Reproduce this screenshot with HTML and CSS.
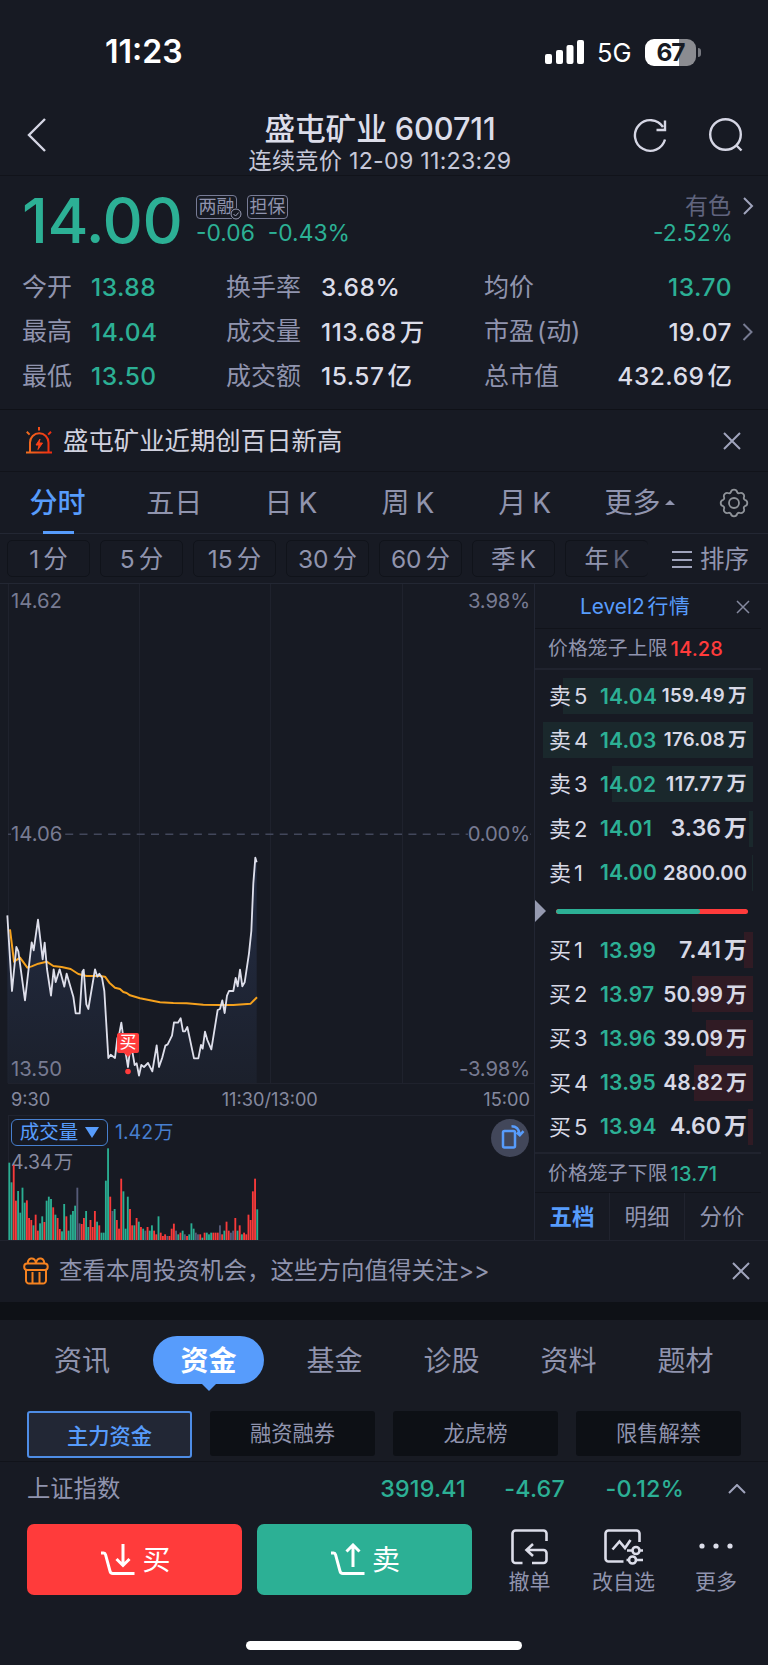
FILE: index.html
```
<!DOCTYPE html>
<html lang="zh-CN">
<head>
  <meta charset="UTF-8">
  <meta name="viewport" content="width=device-width, initial-scale=1.0">
  <title>盛屯矿业 600711</title>
  <link rel="stylesheet" href="styles.css">
</head>
<body>
  <!-- Status bar -->
  <div class="status-bar">
    <span class="clock">11:23</span>
    <div class="status-right">
      <svg class="signal" width="40" height="26" viewBox="0 0 40 26">
        <rect x="0" y="15" width="7" height="10" rx="2"/>
        <rect x="11" y="11" width="7" height="14" rx="2"/>
        <rect x="21.500" y="6" width="7" height="19" rx="2"/>
        <rect x="32" y="1" width="7" height="24" rx="2"/>
      </svg>
      <span class="network">5G</span>
      <div class="battery"><span>67</span></div>
      <i class="battery-tip"></i>
    </div>
  </div>

  <!-- Header -->
  <header class="top-bar">
    <svg class="back" width="22" height="36" viewBox="0 0 22 36"><path d="M19 2L3 18l16 16"/></svg>
    <div class="title">
      <h1>盛屯矿业 600711</h1>
      <p>连续竞价 12-09 11:23:29</p>
    </div>
    <div class="top-icons">
      <svg width="36" height="36" viewBox="0 0 36 36"><path d="M33 22.500A15.300 15.300 0 1 1 31 10M33 3.500v9.500H24.500"/></svg>
      <svg width="36" height="36" viewBox="0 0 36 36"><circle cx="17.500" cy="17.500" r="15.300"/><path d="M28 28l5.500 5.500"/></svg>
    </div>
  </header>

  <!-- Quote -->
  <section class="quote">
    <div class="quote-top">
      <span class="price">14.00</span>
      <div class="change">
        <div class="tags">
          <span class="tag">两融<svg class="tag-check" width="12" height="12" viewBox="0 0 12 12"><circle cx="6" cy="6" r="5"/><path d="M3.500 6l2 2 3.200-3.500"/></svg></span>
          <span class="tag">担保</span>
        </div>
        <div class="diff"><span>-0.06</span><span>-0.43%</span></div>
      </div>
      <div class="sector">
        <span class="sector-name">有色</span>
        <span class="sector-diff">-2.52%</span>
      </div>
      <svg class="arrow" width="12" height="18" viewBox="0 0 12 18"><path d="M2 1l8 8-8 8"/></svg>
    </div>
    <div class="stats">
      <span>今开</span><b class="green">13.88</b><span>换手率</span><b>3.68%</b><span>均价</span><b class="green last">13.70</b><i></i>
      <span>最高</span><b class="green">14.04</b><span>成交量</span><b>113.68<em>万</em></b><span>市盈<em>(动)</em></span><b class="last">19.07</b><svg width="12" height="18" viewBox="0 0 12 18"><path d="M1.500 1l8 8-8 8"/></svg>
      <span>最低</span><b class="green">13.50</b><span>成交额</span><b>15.57<em>亿</em></b><span>总市值</span><b class="last">432.69<em>亿</em></b><i></i>
    </div>
  </section>

  <!-- News alert -->
  <div class="alert">
    <svg width="28" height="28" viewBox="0 0 28 28">
      <defs><linearGradient id="alarm" x1="0" x2="1"><stop offset="0" stop-color="#f07020"/><stop offset="1" stop-color="#f02a10"/></linearGradient></defs>
      <path d="M1 26.500h26M5 26V16.500a9 9 0 0 1 18.500 0V26M14 1v3.500M1.800 5.800l2.800 2.800M26 5.800l-2.800 2.800" fill="none" stroke="url(#alarm)" stroke-width="2"/>
      <path d="M15 13l-4 6h3l-1 4.500 4.500-6.500H14z" fill="#f84018" stroke="#f84018" stroke-width="1"/>
    </svg>
    <span>盛屯矿业近期创百日新高</span>
    <svg class="close" width="18" height="18" viewBox="0 0 18 18"><path d="M1 1l16 16M17 1L1 17"/></svg>
  </div>

  <!-- Chart tabs -->
  <nav class="chart-tabs">
    <span class="active">分时</span><span>五日</span><span>日<em>K</em></span><span>周<em>K</em></span><span>月<em>K</em></span>
    <span class="more">更多<i></i></span>
    <svg width="30" height="30" viewBox="0 0 30 30"><path d="M11.800 4.200a3.300 3.300 0 0 1 6.400 0a2 2 0 0 0 2.200 1a3.300 3.300 0 0 1 4.400 4.400a2 2 0 0 0 1 2.200a3.300 3.300 0 0 1 0 6.400a2 2 0 0 0-1 2.200a3.300 3.300 0 0 1-4.400 4.400a2 2 0 0 0-2.200 1a3.300 3.300 0 0 1-6.400 0a2 2 0 0 0-2.200-1a3.300 3.300 0 0 1-4.400-4.400a2 2 0 0 0-1-2.200a3.300 3.300 0 0 1 0-6.400a2 2 0 0 0 1-2.200a3.300 3.300 0 0 1 4.400-4.400a2 2 0 0 0 2.200-1z"/><circle cx="15" cy="15" r="5"/></svg>
  </nav>
  <nav class="periods">
    <span>1<em>分</em></span><span>5<em>分</em></span><span>15<em>分</em></span><span>30<em>分</em></span><span>60<em>分</em></span><span>季<em>K</em></span><span class="fade">年<em>K</em></span>
    <div class="sort"><i></i>排序</div>
  </nav>

  <main class="market">
    <div class="charts">
      <!-- Price chart -->
      <div class="price-chart">
        <svg width="534" height="500" viewBox="0 0 534 500">
          <defs><linearGradient id="area" x1="0" y1="0" x2="0" y2="1"><stop offset="0" stop-color="#26304a"/><stop offset="1" stop-color="#1c212d"/></linearGradient></defs>
          <path d="M8.500 0v499M139.500 0v499M270.500 0v499M402.500 0v499M8 499.500h526" class="grid"/>
          <path d="M8 250.300H534" stroke="#42475b" stroke-width="1.500" stroke-dasharray="8 6.300" fill="none"/>
          <g transform="translate(0 236) scale(.33333)" fill="none">
            <path id="areaPath" fill="url(#area)" opacity=".85"/>
            <polyline stroke="#f5a11d" stroke-width="6" stroke-linejoin="round" points="30,328 42,425 60,413 82,443 95,439 115,431 140,425 160,438 185,441 212,447 235,462 260,468 300,468 315,470 328,488 345,503 360,507 370,516 380,519 390,526 420,535 450,541 480,547 520,549 560,550 610,554 660,555 700,555 752,551 762,541 771,532"/>
            <polyline id="priceLine" stroke="#dedfeb" stroke-width="5.500" stroke-linejoin="round" points="22,286 36,513 49,381 55,394 75,541 95,367 101,391 114,299 128,418 134,368 141,447 153,527 161,448 167,486 179,448 193,500 200,461 220,530 227,580 239,580 247,455 251,449 259,553 265,567 285,448 292,470 298,461 306,473 313,513 325,714 332,704 345,714 352,655 358,640 364,608 371,660 378,705 384,741 391,680 398,700 404,735 410,730 417,767 424,735 432,741 444,729 457,754 470,676 477,741 487,712 496,677 503,673 516,647 522,607 534,608 542,595 549,634 555,634 562,621 582,715 595,715 603,675 608,686 615,635 622,660 634,688 653,570 660,567 667,541 674,579 681,527 687,513 700,513 707,474 713,499 720,449 727,499 734,487 747,400 754,333 760,190 766,113 770,127"/>
          </g>
          <path d="M124 469l4 4 4-4z" fill="#ff3b3b"/>
          <circle cx="128" cy="487.500" r="2.800" fill="#ff3b3b"/>
        </svg>
        <span class="label tl">14.62</span>
        <span class="label tr">3.98%</span>
        <span class="label ml">14.06</span>
        <span class="label mr">0.00%</span>
        <span class="label bl">13.50</span>
        <span class="label br">-3.98%</span>
        <span class="buy-flag">买</span>
      </div>
      <div class="times"><span>9:30</span><span class="noon">11:30/13:00</span><span>15:00</span></div>

      <!-- Volume chart -->
      <div class="volume">
        <div class="volume-head">
          <span class="select">成交量<i></i></span>
          <span class="current">1.42<em>万</em></span>
        </div>
        <span class="max">4.34<em>万</em></span>
        <svg id="volumeBars" width="260" height="92" viewBox="0 0 260 92"></svg>
        <div class="rotate">
          <svg width="24" height="26" viewBox="0 0 24 26"><rect x="2" y="7" width="12" height="16.500" rx="1.500"/><path d="M10.500 2.200c4.500 0 7.500 2.700 8.300 8.300M15.700 8.500l3.100 2.800 3.700-4.200"/></svg>
        </div>
      </div>
    </div>

    <!-- Order book -->
    <aside class="book">
      <div class="book-head"><span>Level2<em>行情</em></span><svg width="14" height="14" viewBox="0 0 14 14"><path d="M1 1l12 12M13 1L1 13"/></svg></div>
      <div class="limit upper">价格笼子上限<b class="red">14.28</b></div>
      <ul class="orders asks">
        <li><i style="width: 190px"></i><span>卖<em>5</em></span><b>14.04</b><strong class="s">159.49<em>万</em></strong></li>
        <li><i style="width: 210px"></i><span>卖<em>4</em></span><b>14.03</b><strong class="s">176.08<em>万</em></strong></li>
        <li><i style="width: 141px"></i><span>卖<em>3</em></span><b>14.02</b><strong class="m">117.77<em>万</em></strong></li>
        <li><i style="width: 4px"></i><span>卖<em>2</em></span><b>14.01</b><strong>3.36<em>万</em></strong></li>
        <li><i style="width: 1px"></i><span>卖<em>1</em></span><b>14.00</b><strong class="m">2800.00</strong></li>
      </ul>
      <div class="ratio"><i class="pointer"></i><div class="ratio-bar"><i style="width: 75.200%"></i></div></div>
      <ul class="orders bids">
        <li><i style="width: 9px"></i><span>买<em>1</em></span><b>13.99</b><strong>7.41<em>万</em></strong></li>
        <li><i style="width: 61px"></i><span>买<em>2</em></span><b>13.97</b><strong class="l">50.99<em>万</em></strong></li>
        <li><i style="width: 47px"></i><span>买<em>3</em></span><b>13.96</b><strong class="l">39.09<em>万</em></strong></li>
        <li><i style="width: 59px"></i><span>买<em>4</em></span><b>13.95</b><strong class="l">48.82<em>万</em></strong></li>
        <li><i style="width: 5px"></i><span>买<em>5</em></span><b>13.94</b><strong>4.60<em>万</em></strong></li>
      </ul>
      <div class="limit lower">价格笼子下限<b class="green">13.71</b></div>
      <div class="book-tabs"><span class="active">五档</span><span>明细</span><span>分价</span></div>
    </aside>
  </main>

  <!-- Promo -->
  <div class="promo">
    <svg width="26" height="28" viewBox="0 0 26 28"><rect x="1.200" y="6.500" width="23.500" height="6.500" rx="3"/><path d="M3 13v10.500a3 3 0 0 0 3 3h14a3 3 0 0 0 3-3V13M9.500 15v11M16.500 15v11M13 6.500C13 3 10.500 1 8 1.500S4.500 4.500 5 6.500M13 6.500C13 3 15.500 1 18 1.500s3.500 3 3 5"/></svg>
    <span>查看本周投资机会，这些方向值得关注&gt;&gt;</span>
    <svg class="close" width="18" height="18" viewBox="0 0 18 18"><path d="M1 1l16 16M17 1L1 17"/></svg>
  </div>

  <!-- Info tabs -->
  <nav class="info-tabs">
    <span>资讯</span><span class="active">资金</span><span>基金</span><span>诊股</span><span>资料</span><span>题材</span>
  </nav>
  <div class="sub-tabs">
    <span class="active">主力资金</span><span>融资融券</span><span>龙虎榜</span><span>限售解禁</span>
  </div>

  <!-- Index row -->
  <div class="index-row">
    <span class="index-name">上证指数</span>
    <b class="i1">3919.41</b><b class="i2">-4.67</b><b class="i3">-0.12%</b>
    <svg width="18" height="10" viewBox="0 0 18 10"><path d="M1 9l8-8 8 8"/></svg>
  </div>

  <!-- Bottom actions -->
  <footer class="actions">
    <button class="buy"><svg width="36" height="34" viewBox="0 0 36 34"><path d="M1 10h2.500a2 2 0 0 1 2 1.500L10 28a3 3 0 0 0 3 2.500h21.500M23 1v21.500M16.500 16l6.500 6.500 6.500-6.500"/></svg>买</button>
    <button class="sell"><svg width="36" height="34" viewBox="0 0 36 34"><path d="M1 10h2.500a2 2 0 0 1 2 1.500L10 28a3 3 0 0 0 3 2.500h21.500M23 24V2M16.500 8.500L23 2l6.500 6.500"/></svg>卖</button>
    <div class="action a1">
      <svg width="38" height="36" viewBox="0 0 38 36"><path d="M11.500 34H4.500a3 3 0 0 1-3-3V4.500a3 3 0 0 1 3-3h28a3 3 0 0 1 3 3V12M22 15l-6.500 6 6.500 6M16 21h16.500a3 3 0 0 1 3 3v7a3 3 0 0 1-3 3H21"/></svg>
      <span>撤单</span>
    </div>
    <div class="action a2">
      <svg width="40" height="36" viewBox="0 0 40 36"><path d="M19.500 32.500H4.500a3 3 0 0 1-3-3v-25a3 3 0 0 1 3-3h28a3 3 0 0 1 3 3V13M8.500 20.500l7-8 5.500 6.500 5.500-8M23 21.500h5.500M35.500 21.500H39M22.500 31h2.500M32 31h7"/><circle cx="32" cy="21.500" r="3.500"/><circle cx="28.500" cy="31" r="3.500"/></svg>
      <span>改自选</span>
    </div>
    <div class="action a3">
      <svg width="36" height="36" viewBox="0 0 36 36" class="dots"><circle cx="4" cy="17" r="2.600"/><circle cx="18" cy="17" r="2.600"/><circle cx="32" cy="17" r="2.600"/></svg>
      <span>更多</span>
    </div>
  </footer>
  <div class="home-indicator"><i></i></div>

  <script>
    // Close the price line down to the axis for the area fill
    const points = document.getElementById('priceLine').getAttribute('points');
    document.getElementById('areaPath').setAttribute('d', 'M' + points.replaceAll(' ', 'L') + 'L770,789L22,789Z');

    // One bar per minute: direction (g down, r up, n flat) and height
    const volumes = 'g232 g173 r225 r118 g147 g82 g157 g112 r119 r66 r60 g44 r76 r28 g50 g71 r54 g118 g130 g123 r98 g76 r66 r33 g26 g108 r71 g28 g76 g87 g103 n157 n50 r48 r66 g87 g39 r60 r39 r87 g55 r44 g22 g22 g178 g275 r130 n87 g93 r60 r34 r184 g146 g34 g130 r93 r44 g44 r66 g55 r39 g34 n28 r39 g28 g44 r28 r17 g71 r22 r12 r17 n12 r12 r34 r49 n28 g17 r22 g28 n17 r12 g17 g50 g34 n22 n17 r17 g7 r22 g22 g17 g22 r22 r22 r22 n44 r17 g28 r55 r28 n22 n28 r66 g28 r44 g17 r22 r17 r76 r60 r146 r184 g92'.split(' ');
    const colors = { g: '#2aae92', r: '#f83a3a', n: '#565b78' };
    document.getElementById('volumeBars').innerHTML = volumes.map((item, i) => {
      const h = item.slice(1) / 3;
      return `<rect x="${(8.4 + i * 2.194).toFixed(2)}" y="${(92 - h).toFixed(2)}" width="1.85" height="${h.toFixed(2)}" fill="${colors[item[0]]}"/>`;
    }).join('');
  </script>
</body>
</html>
```
FILE: styles.css
```
/* General Styling */
* {
  box-sizing: border-box;
}

body {
  margin: 0;
  width: 768px;
  height: 1665px;
  overflow: hidden;
  background-color: #171a23;
  color: #9094ae;
  font-family: Inter, "Noto Sans CJK SC", sans-serif;
  line-height: 1;
  white-space: nowrap;
}

h1, p, ul {
  margin: 0;
  padding: 0;
}

em, i {
  font-style: normal;
}

b {
  font-weight: 500;
}

svg {
  flex: none;
  fill: none;
  stroke: #a0a4bc;
  stroke-width: 2;
}

.green {
  color: #2cb095;
}

.red {
  color: #ff3b3b;
}

/* Status bar */
.status-bar {
  height: 100px;
  padding: 4px 67px 0 105px;
  display: flex;
  align-items: center;
  justify-content: space-between;
  color: #fff;
}

.clock {
  font-size: 32px;
  font-weight: 600;
}

.status-right {
  display: flex;
  align-items: center;
}

.signal {
  fill: #fff;
  stroke: none;
}

.network {
  margin-left: 12px;
  width: 48px;
  padding-top: 2px;
  font-size: 25.500px;
}

.battery {
  width: 51px;
  height: 27px;
  border-radius: 9px;
  background: linear-gradient(90deg, #fff 67%, #8b8c91 67%);
  color: #171a23;
  display: flex;
  align-items: center;
  justify-content: center;
  font-size: 24.500px;
  font-weight: 700;
  letter-spacing: -1px;
}

.battery-tip {
  width: 3px;
  height: 9px;
  margin-left: 2px;
  border-radius: 0 4px 4px 0;
  background-color: #777980;
}

/* Header */
.top-bar {
  height: 76px;
  padding: 0 24px 0 26px;
  display: grid;
  grid-template-columns: 112px 1fr 112px;
  border-bottom: 1px solid #11131a;
}

.top-bar svg {
  stroke: #d5d6e4;
  stroke-width: 2.400;
  margin-top: 17px;
}

.title {
  text-align: center;
  color: #dcdde9;
  padding: 14px 10px 0 0;
}

.title h1 {
  font-size: 30.700px;
  line-height: 30px;
  font-weight: 500;
  letter-spacing: -0.100px;
}

.title p {
  margin-top: 6px;
  font-size: 23.200px;
  line-height: 23px;
  letter-spacing: 0.250px;
  color: #c6c8d9;
}

.top-icons {
  display: flex;
  justify-content: space-between;
}

/* Quote */
.quote {
  height: 234px;
  border-bottom: 1px solid #0f1117;
}

.quote-top {
  height: 89px;
  padding: 0 14px 0 22px;
  display: flex;
}

.price {
  width: 174px;
  padding-top: 13px;
  font-size: 62.500px;
  font-weight: 500;
  letter-spacing: -0.500px;
  color: #2cb095;
}

.change {
  padding-top: 19px;
}

.tags {
  display: flex;
  gap: 10px;
}

.tag {
  position: relative;
  width: 41px;
  height: 24px;
  border: 1px solid #777b95;
  border-radius: 4px;
  font-size: 18px;
  line-height: 22px;
  text-align: center;
}

.tag-check {
  position: absolute;
  right: -6px;
  bottom: -2px;
  background-color: #171a23;
  border-radius: 50%;
  stroke-width: 1;
}

.diff {
  display: flex;
  gap: 13px;
  padding-top: 3px;
  font-size: 22.800px;
  color: #2cb095;
}

.sector {
  margin-left: auto;
  padding-top: 18px;
  display: flex;
  flex-direction: column;
  align-items: flex-end;
  font-size: 23px;
}

.sector-name {
  color: #60647e;
  line-height: 25px;
  padding-right: 2px;
}

.sector-diff {
  color: #2cb095;
  padding-top: 3px;
  font-size: 22.800px;
}

.arrow {
  margin: 21px 0 0 9px;
}

.stats {
  display: grid;
  grid-template-columns: 69px 135px 95px 163px 105px 143px 36px;
  grid-auto-rows: 44.600px;
  align-items: center;
  padding-left: 22px;
  font-size: 25px;
}

.stats b {
  font-size: 24.500px;
  letter-spacing: 0.500px;
}

.stats b:not(.green) {
  color: #dcdde9;
}

.stats em {
  margin-left: 3px;
  letter-spacing: 0;
}

.stats .last {
  text-align: right;
}

.stats svg {
  margin-left: 10px;
  stroke: #777b92;
}

/* News alert */
.alert {
  height: 62px;
  padding: 0 27px 0 25px;
  display: flex;
  align-items: center;
  border-bottom: 1px solid #11131a;
}

.alert svg:first-child {
  margin-top: -2px;
}

.alert span {
  margin-left: 10px;
  font-size: 25.400px;
  color: #d0d1df;
}

.close {
  margin-left: auto;
}

/* Chart tabs */
.chart-tabs {
  height: 62px;
  padding-right: 19px;
  display: flex;
  align-items: center;
  font-size: 28px;
  border-bottom: 1px solid #232733;
}

.chart-tabs span {
  position: relative;
  width: 116.800px;
  line-height: 62px;
  text-align: center;
}

.chart-tabs span:not(.active) {
  left: -1px;
}

.chart-tabs em {
  margin-left: 6px;
}

.chart-tabs .active {
  padding-right: 2px;
  color: #579cfc;
  font-weight: 500;
}

.chart-tabs .active::after {
  content: "";
  position: absolute;
  left: 43px;
  bottom: 0;
  width: 31px;
  height: 3px;
  background-color: #579cfc;
}

.chart-tabs .more {
  width: 114px;
  display: flex;
  align-items: center;
  justify-content: center;
  margin-right: auto;
}

.more i {
  margin-left: 5px;
  border: 5.500px solid transparent;
  border-top: none;
  border-bottom-color: #9094ae;
}

.chart-tabs svg {
  stroke: #8f9399;
  stroke-width: 1.800;
}

.periods {
  height: 50px;
  padding: 0 19px 0 7px;
  display: flex;
  align-items: center;
  gap: 10px;
  border-bottom: 1px solid #232733;
  font-size: 24.500px;
}

.periods span {
  width: 83px;
  height: 37px;
  border: 1px solid #10131a;
  border-radius: 5px;
  line-height: 37px;
  text-align: center;
}

.periods em {
  margin-left: 4px;
}

.periods .fade {
  border-right: none;
}

.fade em {
  color: #606479;
}

.sort {
  margin-left: auto;
  padding-top: 2px;
  display: flex;
  align-items: center;
  gap: 8px;
}

.sort i {
  width: 20px;
  height: 17px;
  border: solid #a0a4bc;
  border-width: 2px 0;
  background: linear-gradient(#a0a4bc, #a0a4bc) center / 20px 2px no-repeat;
}

/* Charts */
.market {
  display: flex;
  height: 657px;
  border-bottom: 1px solid #20232e;
}

.charts {
  width: 534px;
}

.price-chart {
  position: relative;
  height: 500px;
}

.price-chart > svg {
  display: block;
  stroke: none;
}

.grid {
  stroke: #1f222d;
  stroke-width: 1;
}

.label {
  position: absolute;
  font-size: 20.300px;
  color: #777b92;
}

.tl, .ml, .bl {
  left: 11px;
}

.tr, .mr, .br {
  right: 4px;
  letter-spacing: -0.150px;
}

.tl, .tr {
  top: 7px;
}

.ml, .mr {
  top: 240px;
  background-color: #171a23;
}

.bl, .br {
  bottom: 5px;
}

.buy-flag {
  position: absolute;
  left: 117px;
  top: 449px;
  width: 22px;
  height: 20px;
  border-radius: 2px;
  background-color: #ff3b3b;
  color: #fff;
  font-size: 17px;
  line-height: 19px;
  text-align: center;
}

.times {
  height: 31px;
  padding: 0 4px 1px 11px;
  display: flex;
  align-items: center;
  justify-content: space-between;
  font-size: 18.200px;
  color: #85899f;
}

.noon {
  padding-left: 6px;
}

.volume {
  position: relative;
  height: 125px;
  margin-left: 8px;
  border-top: 1px solid #20232e;
  border-left: 1px solid #20232e;
}

.volume-head {
  display: flex;
  align-items: center;
  padding: 3px 0 0 2px;
  font-size: 19.500px;
  color: #579cfc;
}

.select {
  height: 27px;
  width: 97px;
  border: 1.500px solid #477fce;
  border-radius: 6px;
  display: flex;
  align-items: center;
  justify-content: center;
}

.select i {
  margin-left: 7px;
  border: 7px solid transparent;
  border-top: 11px solid #579cfc;
  border-bottom: none;
}

.current {
  margin-left: 7px;
  color: #477fce;
}

.volume em {
  margin-left: 1px;
}

.max {
  position: absolute;
  left: 2px;
  top: 37px;
  font-size: 19.500px;
  color: #85899f;
}

#volumeBars {
  position: absolute;
  left: -9px;
  bottom: 0;
  stroke: none;
}

.rotate {
  position: absolute;
  right: 5px;
  top: 3px;
  width: 38px;
  height: 38px;
  border-radius: 50%;
  background-color: #42475a;
  display: flex;
  align-items: center;
  justify-content: center;
}

.rotate svg {
  margin: -3px 0 0 5px;
  stroke: #579cfc;
  stroke-width: 2.500;
}

/* Order book */
.book {
  width: 227px;
  border-left: 1px solid #222633;
}

.book-head {
  height: 45px;
  padding: 2px 11px 0 45px;
  display: flex;
  align-items: center;
  justify-content: space-between;
  font-size: 20.800px;
  color: #579cfc;
  border-bottom: 1px solid #11131a;
}

.book-head em {
  margin-left: 3px;
  letter-spacing: 0.500px;
}

.book-head svg {
  stroke: #85899f;
  stroke-width: 1.500;
}

.limit {
  height: 41px;
  padding: 1px 0 0 13px;
  display: flex;
  align-items: center;
  font-size: 19.800px;
  letter-spacing: 0.150px;
}

.limit b {
  margin-left: 3px;
  font-size: 20px;
}

.upper {
  border-bottom: 2px solid #20232e;
}

.lower {
  padding-top: 3px;
  border-top: 2px solid #20232e;
  border-bottom: 1px solid #11131a;
}

.orders {
  list-style: none;
  padding: 0 8px 0 8px;
}

.asks {
  margin-top: 4px;
}

.bids {
  margin-bottom: 3px;
}

.orders li {
  position: relative;
  height: 44.200px;
  padding: 0 6px 0 6px;
  display: flex;
  align-items: center;
  color: #d8d9e6;
}

/* depth bar behind the row */
.orders i {
  position: absolute;
  right: 0;
  top: 4px;
  height: 36px;
  background-color: #1a282c;
}

.bids i {
  background-color: #301b24;
}

.orders span,
.orders b,
.orders strong {
  position: relative;
}

.orders span {
  width: 51px;
  font-size: 22px;
}

.orders em {
  margin-left: 3px;
}

.orders b {
  font-size: 21px;
  font-weight: 600;
  letter-spacing: 0.200px;
  color: #2cb095;
}

.orders strong {
  margin-left: auto;
  font-size: 23px;
  font-weight: 600;
}

.orders .s {
  font-size: 18.700px;
  letter-spacing: 0.300px;
}

.orders .m {
  font-size: 20.200px;
  letter-spacing: 0.300px;
}

.orders .m:not(:has(em)) {
  letter-spacing: 0;
}

.orders .l {
  font-size: 21px;
}

.ratio {
  height: 33px;
  padding: 0 13px 0 0;
  display: flex;
  align-items: center;
}

.pointer {
  border: 11px solid transparent;
  border-left: 11px solid #969ab0;
  border-right: none;
}

.ratio-bar {
  flex: 1;
  margin-left: 10px;
  height: 5px;
  border-radius: 3px;
  overflow: hidden;
  background-color: #ff3b3b;
}

.ratio-bar i {
  display: block;
  height: 5px;
  border-radius: 3px;
  background-color: #2cb095;
}

.book-tabs {
  display: flex;
  width: 224px;
  height: 47px;
  font-size: 22.500px;
}

.book-tabs span {
  flex: 1;
  line-height: 47px;
  text-align: center;
}

.book-tabs span + span {
  border-left: 1px solid #20232e;
}

.book-tabs .active {
  color: #579cfc;
  font-weight: 700;
}

/* Promo */
.promo {
  height: 79px;
  padding: 0 18px 2px 23px;
  display: flex;
  align-items: center;
  border-bottom: 18px solid #0e1116;
}

.promo svg:first-child {
  stroke: #f58220;
}

.promo span {
  margin-left: 10px;
  font-size: 23.500px;
}

/* Info tabs */
.info-tabs {
  height: 91px;
  padding: 16px 0 0 23.500px;
  display: flex;
  background-color: #181b23;
  font-size: 28px;
}

.info-tabs span {
  position: relative;
  width: 117px;
  height: 48px;
  line-height: 50px;
  text-align: center;
}

.info-tabs .active {
  width: 111px;
  margin: 0 12px 0 12.500px;
  border-radius: 24px;
  background-color: #579cfc;
  color: #fff;
  font-weight: 700;
}

.info-tabs .active::after {
  content: "";
  position: absolute;
  left: 48px;
  top: 47px;
  border: 8px solid transparent;
  border-top-color: #579cfc;
  border-bottom: none;
}

.sub-tabs {
  height: 51px;
  padding: 0 27px;
  display: grid;
  grid-template-columns: repeat(4, 165px);
  justify-content: space-between;
  align-items: start;
  background-color: #181b23;
  border-bottom: 1px solid #11131a;
  font-size: 21.300px;
}

.sub-tabs span {
  height: 45px;
  border-radius: 3px;
  background-color: #0d1015;
  line-height: 45px;
  text-align: center;
}

.sub-tabs .active {
  height: 47px;
  border: 2px solid #4e8de6;
  background-color: #222735;
  color: #579cfc;
  font-weight: 500;
  line-height: 46px;
}

/* Index row */
.index-row {
  height: 52px;
  padding: 2px 22px 0 27px;
  display: flex;
  align-items: center;
  font-size: 23.300px;
}

.index-row b {
  color: #2cb095;
  text-align: right;
  letter-spacing: 0.200px;
}

.index-name {
  width: 250px;
}

.i1 {
  width: 189px;
}

.i2 {
  width: 99px;
}

.i3 {
  width: 119px;
}

.index-row svg {
  margin-left: auto;
}

/* Bottom actions */
.actions {
  height: 106px;
  padding: 10px 0 0 27px;
  display: flex;
}

.actions button {
  width: 215px;
  height: 71px;
  margin-right: 14.500px;
  padding: 0 0 0 2px;
  border: none;
  border-radius: 7px;
  color: #fff;
  font: 28px Inter, "Noto Sans CJK SC", sans-serif;
  line-height: 1;
  display: flex;
  align-items: center;
  justify-content: center;
  gap: 6px;
}

.actions button svg {
  stroke: #fff;
  stroke-width: 3;
}

.buy {
  background-color: #ff3b3b;
}

.sell {
  background-color: #2cb095;
}

.action {
  display: flex;
  flex-direction: column;
  align-items: center;
  gap: 6px;
  padding-top: 5px;
  font-size: 21px;
}

.action svg {
  stroke: #dcdde9;
  stroke-width: 2.600;
}

.action .dots {
  fill: #dcdde9;
  stroke: none;
}

.a1 {
  width: 87px;
}

.a2 {
  width: 101px;
}

.a3 {
  width: 84px;
}

.home-indicator {
  height: 46px;
  padding-top: 21px;
  border-bottom: 1px solid #777980;
}

.home-indicator i {
  display: block;
  width: 276px;
  height: 9px;
  margin: 0 auto;
  border-radius: 5px;
  background-color: #fff;
}
```
